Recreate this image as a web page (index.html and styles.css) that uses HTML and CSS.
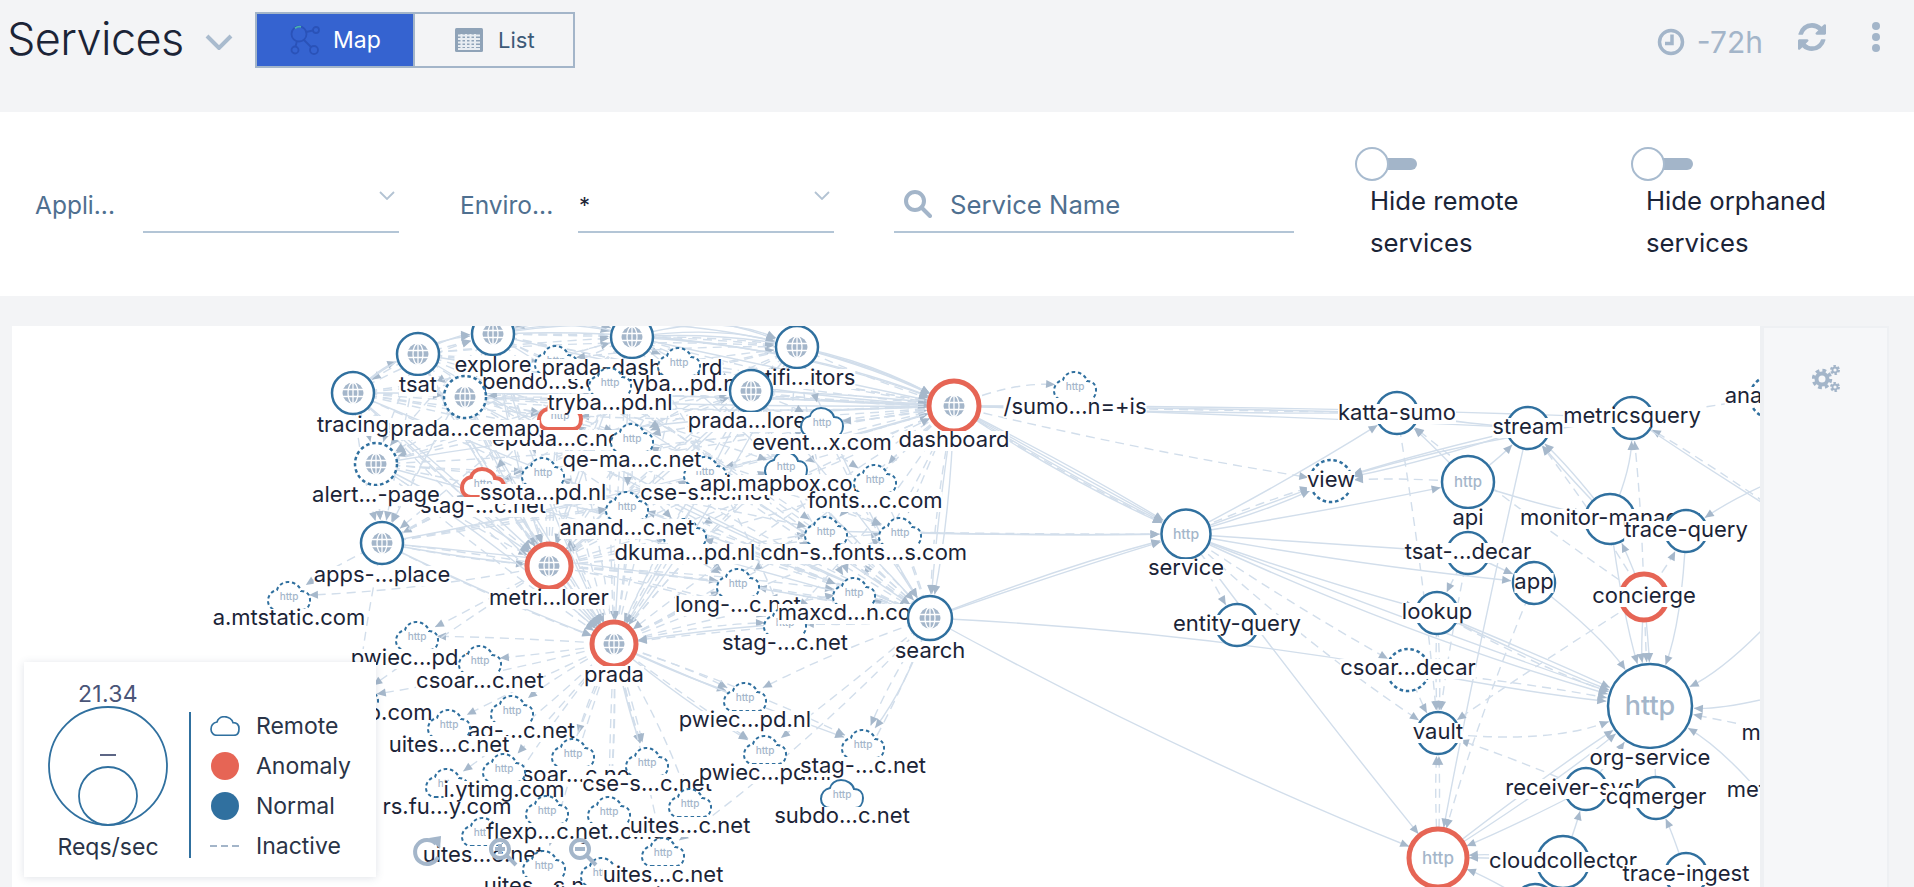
FILE: index.html
```html
<!DOCTYPE html>
<html lang="en">
<head>
<meta charset="utf-8">
<title>Services</title>
<link rel="stylesheet" href="styles.css">
</head>
<body>
<div class="page">
  <header class="topbar">
    <h1 class="title">Services</h1>
    <svg class="title-chevron" viewBox="0 0 28 16"><path d="M2 2 14 14 26 2"/></svg>
    <div class="switch">
      <button class="switch-btn active">
        <svg class="map-icon" viewBox="0 0 32 30"><circle cx="9" cy="9" r="7.5"/><circle cx="26" cy="5" r="3"/><circle cx="5" cy="25" r="3.5"/><circle cx="24" cy="25" r="4"/><path d="M16 7 23 5.500M7 16 5.500 21.500M14 15 21 22"/><path class="map-spin" d="M5 3.200A7.500 7.500 0 0 1 11 1.800"/></svg>
        <span>Map</span>
      </button>
      <button class="switch-btn">
        <svg class="list-icon" viewBox="0 0 28 24"><rect width="28" height="24" rx="1.500" class="list-bg"/><path class="list-grid" d="M3 7.500H25M3 11H25M3 14.500H25M3 18H25M3 21H25M6.500 6V22M11 6V22M15.500 6V22M20 6V22"/></svg>
        <span>List</span>
      </button>
    </div>
    <div class="top-actions">
      <div class="range">
        <svg class="clock" viewBox="0 0 28 28"><circle cx="14" cy="14" r="11.500"/><path d="M15 6.500V15.500H8"/></svg>
        <span>-72h</span>
      </div>
      <svg class="refresh" viewBox="0 0 1536 1536"><path d="M1511 928q0 5-1 7-64 268-268 434.500t-478 166.500q-146 0-282.500-55t-243.500-157l-129 129q-19 19-45 19t-45-19-19-45v-448q0-26 19-45t45-19h448q26 0 45 19t19 45-19 45l-137 137q71 66 161 102t187 36q134 0 250-65t186-179q11-17 53-117 8-23 30-23h192q13 0 22.500 9.500t9.500 22.500zm25-800v448q0 26-19 45t-45 19h-448q-26 0-45-19t-19-45 19-45l138-138q-148-137-349-137-134 0-250 65t-186 179q-11 17-53 117-8 23-30 23h-199q-13 0-22.500-9.500t-9.500-22.500v-7q65-268 270-434.500t480-166.500q146 0 284 55.500t245 156.500l130-129q19-19 45-19t45 19 19 45z"/></svg>
      <div class="kebab"><i></i><i></i><i></i></div>
    </div>
  </header>

  <section class="filters">
    <div class="field field-app">
      <label class="field-label label-app">Appli...</label>
      <div class="select"><svg class="select-chevron" viewBox="0 0 16 9"><path d="M1 1 8 8 15 1"/></svg></div>
    </div>
    <div class="field field-env">
      <label class="field-label label-env">Enviro...</label>
      <div class="select"><span class="select-value">*</span><svg class="select-chevron" viewBox="0 0 16 9"><path d="M1 1 8 8 15 1"/></svg></div>
    </div>
    <div class="field search">
      <svg class="search-icon" viewBox="0 0 28 28"><circle cx="11" cy="11" r="9"/><path d="M17.500 17.500 26 26"/></svg>
      <span class="search-text">Service Name</span>
    </div>
    <div class="toggle-block first">
      <div class="toggle"><span class="thumb"></span><span class="bar"></span></div>
      <p class="toggle-text">Hide remote services</p>
    </div>
    <div class="toggle-block">
      <div class="toggle"><span class="thumb"></span><span class="bar"></span></div>
      <p class="toggle-text">Hide orphaned services</p>
    </div>
  </section>

  <main class="map-row">
    <div class="graph">
      <svg id="graph" class="graph-svg" viewBox="12 326 1748 561">
        <defs>
          <g id="globe">
            <circle r="10.500" class="globe-fill"/>
            <path class="globe-line" d="M-10.500-3.500H10.500M-10.500 3.500H10.500M0-10.500V10.500"/>
            <ellipse rx="5" ry="10.500" class="globe-line"/>
          </g>
          <path id="cloudShape" d="M-12 14H13C18 14 21 10 21 4 21-1 18-5 12-5 11-10 5-14-1-14-7-14-11-10-12-6-17-5-21-1-21 5-21 10-17 14-12 14Z"/>
        </defs>
        <g id="edges"></g>
        <g id="nodes"></g>
        <g class="zoom-tools">
          <path d="M436 844A12 12 0 1 0 438 857"/>
          <path class="zoom-tip" d="M429 838 441 836 440 849Z"/>
          <circle cx="500" cy="849" r="9"/><path d="M507 856 516 865M495 849H505M500 844V854"/>
          <circle cx="580" cy="849" r="9"/><path d="M587 856 596 865M575 849H585"/>
        </g>
      </svg>
      <div class="legend">
        <div class="legend-size">
          <div class="legend-value">21.34</div>
          <svg class="legend-circles" viewBox="0 0 120 120"><circle cx="60" cy="60" r="59"/><circle cx="60" cy="90" r="29"/><path d="M52 49H68"/></svg>
          <div class="legend-unit">Reqs/sec</div>
        </div>
        <div class="legend-divider"></div>
        <ul class="legend-list">
          <li><svg class="legend-cloud" viewBox="-22 -15 44 30"><use href="#cloudShape"/></svg>Remote</li>
          <li><span class="dot dot-anomaly"></span>Anomaly</li>
          <li><span class="dot dot-normal"></span>Normal</li>
          <li><span class="dash-sample"></span>Inactive</li>
        </ul>
      </div>
    </div>
    <aside class="side">
      <svg class="gears" viewBox="0 0 28 28">
        <circle class="gear-teeth" cx="10" cy="15" r="8.500"/><circle class="gear-ring" cx="10" cy="15" r="5.500"/>
        <circle class="gear-teeth small" cx="23" cy="6" r="4"/><circle class="gear-ring small" cx="23" cy="6" r="2.500"/>
        <circle class="gear-teeth small" cx="23" cy="23" r="4"/><circle class="gear-ring small" cx="23" cy="23" r="2.500"/>
      </svg>
    </aside>
  </main>
</div>
<script src="script.js"></script>
</body>
</html>
```

FILE: styles.css
```css
* { box-sizing: border-box; }
html, body { margin: 0; height: 100%; }
body {
  background: #f3f4f6;
  font-family: Inter, "Liberation Sans", sans-serif;
  color: #1b2437;
  overflow: hidden;
}
.page { width: 1914px; height: 887px; display: flex; flex-direction: column; }

/* top bar */
.topbar { height: 112px; flex: none; display: flex; align-items: flex-start; padding-left: 7px; }
.title { margin: 11px 0 0; font-size: 45px; line-height: 56px; font-weight: 300; letter-spacing: -0.6px; color: #1b2437; width: 198px; flex: none; }
.title-chevron { width: 28px; height: 16px; margin-top: 34px; fill: none; stroke: #a9bbce; stroke-width: 4; flex: none; }
.switch { display: flex; margin: 12px 0 0 22px; border: 2px solid #a3b5c9; height: 56px; width: 320px; flex: none; }
.switch-btn { display: flex; align-items: center; width: 158px; border: 0; padding: 0; background: #f3f4f6; font: 22px Inter, sans-serif; color: #3d5a78; }
.switch-btn.active { width: 158px; background: #3563d0; color: #fff; border-right: 2px solid #a3b5c9; padding-left: 33px; font-size: 23px; }
.switch-btn:not(.active) { padding-left: 40px; width: 158px; }
.map-icon { width: 32px; height: 30px; margin-right: 11px; fill: none; stroke: #2a52b8; stroke-width: 1.800; }
.map-spin { stroke: #4db3ad; }
.list-icon { width: 28px; height: 24px; margin-right: 15px; }
.list-bg { fill: #8fa3b8; }
.list-grid { stroke: #e8edf2; stroke-width: 2; fill: none; }
.top-actions { margin-left: auto; display: flex; align-items: flex-start; color: #a3b5c9; padding-right: 34px; }
.range { display: flex; align-items: center; margin-top: 27px; font-size: 30px; line-height: 30px; color: #a3b5c9; }
.clock { width: 28px; height: 28px; margin-right: 12px; fill: none; stroke: #a3b5c9; stroke-width: 3.500; }
.refresh { width: 28px; height: 28px; margin: 23px 0 0 35px; fill: #a3b5c9; }
.kebab { display: flex; flex-direction: column; gap: 3px; margin: 22px 0 0 46px; }
.kebab i { display: block; width: 8px; height: 8px; border-radius: 50%; background: #a3b5c9; }

/* filters */
.filters { height: 184px; flex: none; background: #fff; display: flex; align-items: flex-start; padding: 35px 0 0 35px; }
.field { height: 51px; margin-top: 35px; display: flex; align-items: flex-end; flex: none; }
.field-label { font-size: 24.500px; line-height: 30px; color: #4f7090; margin-bottom: 13px; flex: none; }
.label-app { width: 108px; }
.label-env { width: 118px; }
.field-env { margin-left: 61px; }
.select { width: 256px; height: 51px; border-bottom: 2px solid #b3c5d6; position: relative; }
.select-chevron { position: absolute; right: 4px; top: 9px; width: 16px; height: 9px; fill: none; stroke: #b3c3d3; stroke-width: 1.800; }
.select-value { position: absolute; left: 1px; top: 8px; font-size: 22px; line-height: 30px; color: #1b2437; }
.search { width: 400px; margin-left: 60px; border-bottom: 2px solid #b3c5d6; align-items: flex-start; padding: 8px 0 0 10px; }
.search-icon { width: 28px; height: 28px; margin-right: 18px; fill: none; stroke: #a3b5c9; stroke-width: 4; stroke-linecap: round; }
.search-text { font-size: 25.700px; line-height: 30px; color: #4f7090; }
.toggle-block { width: 276px; flex: none; }
.toggle-block.first { margin-left: 61px; }
.toggle { display: flex; align-items: center; height: 34px; }
.thumb { width: 34px; height: 34px; border-radius: 50%; border: 2px solid #a8bbcf; background: #fff; flex: none; position: relative; z-index: 1; }
.bar { width: 30px; height: 12px; background: #a3b5c9; border-radius: 0 6px 6px 0; margin-left: -2px; }
.toggle-text { margin: -1px 0 0 15px; width: 190px; font-size: 25.700px; line-height: 42px; color: #1b2437; }

/* map */
.map-row { margin-top: 30px; flex: 1; display: flex; padding-left: 12px; min-height: 0; }
.graph { width: 1748px; flex: none; position: relative; background: #fff; overflow: hidden; }
.graph-svg { display: block; width: 1748px; height: 561px; }
.side { width: 129px; flex: none; background: #f6f7f9; border: 2px solid #eef0f3; border-left-width: 4px; border-bottom: 0; display: flex; justify-content: center; padding-top: 36px; }
.gears { width: 28px; height: 28px; }
.gear-teeth { fill: none; stroke: #a3b5c9; stroke-width: 3.500; stroke-dasharray: 3.700 3; }
.gear-teeth.small { stroke-width: 2; stroke-dasharray: 2.400 1.800; }
.gear-ring { fill: none; stroke: #a3b5c9; stroke-width: 4; }
.gear-ring.small { stroke-width: 1.800; }

.edge { fill: none; stroke: #d2deeb; stroke-width: 1.400; }
.edge.dash { stroke-dasharray: 9 6; }
.arrow { fill: #a6b8cb; }
.ring { fill: #fff; stroke: #30709f; stroke-width: 2.500; }
.ring.inactive { stroke-dasharray: 3.500 2.800; }
.ring.red { stroke: #e66555; stroke-width: 5; }
.cloud { fill: #fff; stroke: #30709f; stroke-width: 2; }
.cloud.inactive { stroke-dasharray: 3.500 2.800; }
.cloud.red { stroke: #e66555; stroke-width: 4; }
.globe-fill { fill: #a4b6ca; }
.globe-line { fill: none; stroke: #fff; stroke-width: 1.300; }
.http { font-family: Inter, sans-serif; fill: #a4b6ca; text-anchor: middle; font-weight: 500; }
.node-label { font-family: Inter, sans-serif; font-size: 22px; fill: #1b2437; text-anchor: middle; }
.label-bg { fill: #fff; }
.zoom-tools { fill: none; stroke: #a4b6ca; stroke-width: 4; }
.zoom-tip { fill: #a4b6ca; stroke: none; }

/* legend */
.legend { position: absolute; left: 12px; bottom: 10px; width: 352px; height: 215px; background: #fff; box-shadow: 0 1px 8px rgba(60, 80, 110, .16); display: flex; }
.legend-size { width: 168px; flex: none; text-align: center; padding-top: 20px; font-size: 23px; line-height: 24px; }
.legend-value { color: #4a5578; letter-spacing: .3px; }
.legend-circles { display: block; width: 120px; height: 120px; margin: 0 auto 9px; fill: none; stroke: #30709f; stroke-width: 1.800; overflow: visible; }
.legend-circles path { stroke: #4a5578; }
.legend-unit { color: #2a3447; }
.legend-divider { width: 2px; height: 146px; background: #30709f; margin: 50px 0 0 -3px; flex: none; }
.legend-list { list-style: none; margin: 44px 0 0 19px; padding: 0; font-size: 23px; color: #2a3447; }
.legend-list li { height: 40px; display: flex; align-items: center; gap: 16px; }
.legend-cloud { width: 30px; height: 20px; fill: #fff; stroke: #30709f; stroke-width: 2.500; }
.dot { width: 28px; height: 28px; border-radius: 50%; margin: 0 1px; }
.dot-anomaly { background: #e66555; }
.dot-normal { background: #30709f; }
.dash-sample { width: 30px; height: 2px; background: repeating-linear-gradient(90deg, #a3b5c9 0 7px, transparent 7px 11px); }
```

FILE: script.js
```js
// Service map: node and edge data drawn into the SVG canvas.
const NS = 'http://www.w3.org/2000/svg';
const nodes = [
  // id, kind, x, y, r, label, label baseline, flags (d = inactive, r = anomaly)
  ['mt','c',289,596,18,'a.mtstatic.com',625,'d'],
  ['pw0','c',417,636,18,'pwiec...pd.nl',665,'d'],
  ['cs0','c',480,660,18,'csoar...c.net',688,'d'],
  ['web','c',357,697,18,'assets...b.com',720,'d'],
  ['st5','c',512,710,18,'stag-...c.net',738,'d'],
  ['ui0','c',449,724,18,'uites...c.net',752,'d'],
  ['cs2','c',573,753,18,'csoar...c.net',782,'d'],
  ['rs','c',447,783,18,'rs.fu...y.com',814,'d'],
  ['yt','c',504,768,18,'i.ytimg.com',797,'d'],
  ['cs3','c',647,762,18,'cse-s...c.net',791,'d'],
  ['ui2','c',483,832,18,'uites...c.net',862,'d'],
  ['st6','c',609,811,18,'stag-...c.net',839,'d'],
  ['fl','c',547,810,18,'flexp...c.net',839,'d'],
  ['ui1','c',690,803,18,'uites...c.net',833,'d'],
  ['ui3','c',544,865,18,'uites...c.net',893,'d'],
  ['hi','c',602,872,18,'uites...c.net',901,'d'],
  ['ui4','c',663,852,18,'uites...c.net',882,'d'],

  ['stag1','c',483,483,18,'stag-...c.net',513,'r'],
  ['ssota','c',543,472,18,'ssota...pd.nl',500,'d'],
  ['cse1','c',705,471,18,'cse-s...c.net',500,'d'],
  ['apim','c',786,466,18,'api.mapbox.com',491,''],
  ['fonts1','c',875,479,18,'fonts...c.com',508,'d'],
  ['dkuma','c',685,533,18,'dkuma...pd.nl',560,'d'],
  ['anand','c',627,506,18,'anand...c.net',535,'d'],
  ['cdn','c',826,531,18,'cdn-s...c.net',560,'d'],
  ['fonts2','c',900,532,18,'fonts...s.com',560,'d'],
  ['long','c',738,583,18,'long-...c.net',612,'d'],
  ['stag2','c',785,622,18,'stag-...c.net',650,'d'],
  ['maxcd','c',854,592,18,'maxcd...n.com',620,'d'],
  ['epuda','c',560,415,18,'epuda...c.net',446,'r'],
  ['pendo','c',556,360,18,'pendo...s.com',389,'d'],
  ['explore','g',493,334,21,'explore',372,''],
  ['pdash','g',632,337,21,'prada-dashboard',375,''],
  ['tryba1','c',679,362,18,'tryba...pd.nl',391,'d'],
  ['tryba2','c',610,382,18,'tryba...pd.nl',410,'d'],
  ['tsat','g',418,354,21,'tsat',392,''],
  ['tracing','g',353,393,21,'tracing',432,''],
  ['pcemap','g',465,397,21,'prada...cemap',436,'d'],
  ['qema','c',632,438,18,'qe-ma...c.net',467,'d'],
  ['notifi','g',797,347,21,'notifi...itors',385,''],
  ['plorer','g',751,391,21,'prada...lorer',428,''],
  ['event','c',822,422,18,'event...x.com',450,''],
  ['alert','g',376,464,21,'alert...-page',502,'d'],
  ['apps','g',382,543,21,'apps-...place',582,''],
  ['metri','g',549,566,22,'metri...lorer',605,'r'],
  ['prada','g',614,644,22,'prada',682,'r'],
  ['dashboard','g',954,406,25,'dashboard',447,'r'],
  ['search','g',930,618,22,'search',658,''],
  ['pw1','c',745,697,18,'pwiec...pd.nl',727,'d'],
  ['pw2','c',765,750,18,'pwiec...pd.nl',780,'d'],
  ['st3','c',863,744,18,'stag-...c.net',773,'d'],
  ['subdo','c',842,794,18,'subdo...c.net',823,''],
  ['sumo','c',1075,386,18,'/sumo...n=+is',414,'d'],

  ['service','h',1186,534,24.500,'service',575,''],
  ['view','n',1331,481,21,'view',487,'d'],
  ['entity','n',1237,625,21,'entity-query',631,''],
  ['katta','n',1397,413,21,'katta-sumo',420,''],
  ['stream','n',1528,428,21,'stream',434,''],
  ['mq','n',1632,418,21,'metricsquery',423,''],
  ['ana','n',1771,397,21,'analytics',403,'d'],
  ['api','h',1468,482,26,'api',525,''],
  ['monitor','n',1610,519,25,'monitor-manager',525,''],
  ['trace','n',1686,531,21,'trace-query',537,''],
  ['tsd','n',1468,553,21,'tsat-...decar',559,''],
  ['app','n',1534,583,21,'app',589,''],
  ['concierge','n',1644,597,23,'concierge',603,'r'],
  ['lookup','n',1437,613,21,'lookup',619,''],
  ['csd','n',1408,670,21,'csoar...decar',675,'d'],
  ['vault','n',1438,733,21,'vault',739,''],
  ['org','h',1650,706,42,'org-service',765,''],
  ['receiver','n',1586,789,21,'receiver-syslog',795,''],
  ['cq','n',1656,798,21,'cqmerger',804,''],
  ['mon2','n',1795,735,21,'monitor-ui',740,''],
  ['me','n',1796,792,21,'metering-svc',797,''],
  ['redh','h',1438,858,29,'',0,'r'],
  ['low','n',1535,905,21,'',0,''],
  ['cc','n',1563,862,26,'cloudcollector',868,''],
  ['ti','n',1686,874,21,'trace-ingest',881,''],
  ['xa','x',1800,470,1,'',0,''],
  ['xb','x',1800,690,1,'',0,''],
  ['xc','x',1790,600,1,'',0,''],
  ['xd','x',1790,830,1,'',0,''],
  ['xe','x',1790,520,1,'',0,'']
].map(([id, kind, x, y, r, label, ly, flags]) => ({ id, kind, x, y, r, label, ly, flags }));

const byId = Object.fromEntries(nodes.map(n => [n.id, n]));
const edgesG = document.getElementById('edges');
const nodesG = document.getElementById('nodes');

function el(tag, attrs, parent) {
  const e = document.createElementNS(NS, tag);
  for (const k in attrs) e.setAttribute(k, attrs[k]);
  parent.appendChild(e);
  return e;
}

let seq = 0;
function edge(from, to, dashed, bend) {
  const a = byId[from], b = byId[to];
  seq++;
  if (bend === undefined) bend = ((seq * 7) % 9 - 4) * 0.012;
  const dx = b.x - a.x, dy = b.y - a.y;
  const cx = (a.x + b.x) / 2 - dy * bend, cy = (a.y + b.y) / 2 + dx * bend;
  const tx = b.x - cx, ty = b.y - cy, tl = Math.hypot(tx, ty) || 1;
  const ux = tx / tl, uy = ty / tl;
  const gap = b.r + 2;
  const ex = b.x - ux * gap, ey = b.y - uy * gap;
  el('path', { class: dashed ? 'edge dash' : 'edge', d: `M${a.x} ${a.y}Q${cx.toFixed(1)} ${cy.toFixed(1)} ${ex.toFixed(1)} ${ey.toFixed(1)}` }, edgesG);
  if (b.kind !== 'x') {
    const L = 9, W = 4, bx = ex - ux * L, by = ey - uy * L;
    el('path', { class: 'arrow', d: `M${ex.toFixed(1)} ${ey.toFixed(1)}L${(bx - uy * W).toFixed(1)} ${(by + ux * W).toFixed(1)}L${(bx + uy * W).toFixed(1)} ${(by - ux * W).toFixed(1)}Z` }, edgesG);
  }
}

const globes = ['tsat','tracing','explore','pdash','notifi','pcemap','alert','apps','plorer'];
const clouds = ['pendo','tryba1','tryba2','epuda','qema','stag1','ssota','cse1','apim','anand','dkuma','long','event','fonts1','cdn','fonts2','maxcd','stag2'];
['dashboard','metri','prada'].forEach(hub => {
  globes.forEach(g => { edge(g, hub, false); edge(g, hub, true, 0.03); });
  clouds.forEach(c => edge(hub, c, true));
});
clouds.forEach(c => { edge('search', c, true); });
globes.forEach(g => { edge(g, 'search', false); });
globes.forEach((g, i) => globes.slice(i + 1).forEach(h => edge(g, h, true)));
globes.forEach((g, i) => clouds.forEach((c, j) => { if ((i + j) % 4 === 0) edge(g, c, true); }));

[['explore','pdash',-.12],['explore','pdash',-.2],['pdash','explore',.16],['pdash','notifi',-.1],['pdash','notifi',-.18],
 ['explore','notifi',-.1],['explore','notifi',-.16],['notifi','dashboard',-.06],['pdash','dashboard',-.08],['pdash','dashboard',-.14],
 ['explore','dashboard',-.1],['tsat','explore',-.12],['tracing','tsat',-.1],['tracing','explore',-.16]]
  .forEach(([a, b, k]) => { edge(a, b, false, k); });

['ui0','yt','rs','cs2','cs3','fl','st6','ui1','st5','pw0','cs0'].forEach(c => edge('prada', c, true));
edge('prada','cs3',true,.02); edge('prada','cs3',true,-.02); edge('prada','st6',true,.01); edge('prada','st6',true,-.03);
edge('prada','cs3',false,.04);
['pw1','pw2','st3'].forEach(c => { edge('prada', c, true); edge('search', c, true); });
edge('prada','pw1',false,.03); edge('prada','st3',false,.02); edge('prada','pw2',false,.04);
edge('search','st3',false,-.08); edge('search','subdo',true,-.05);
edge('metri','web',true); edge('metri','pw0',true); edge('metri','mt',true); edge('apps','mt',true,.03);
edge('alert','apps',true,0); edge('apps','web',true,.02); edge('prada','web',true); edge('search','ui4',true);
edge('prada','ui2',true); edge('prada','ui3',true); edge('prada','ui4',true);
edge('metri','prada',false,.02); edge('metri','prada',true,-.06);
edge('dashboard','prada',true); edge('dashboard','search',false,-.04); edge('dashboard','search',false,.02);
edge('dashboard','search',true,.04); edge('search','prada',false); edge('search','prada',true,.02);
edge('dashboard','sumo',true,-.12); edge('metri','search',true); edge('metri','dashboard',true);

[0,.02,-.02,.04].forEach(k => edge('dashboard','service',false,k));
edge('dashboard','service',true,.03);
edge('search','service',false,-.01); edge('search','service',false,-.03);
edge('fonts2','service',true,.005); edge('fonts2','service',false,.01);
edge('cdn','service',false,.01); edge('dashboard','view',true,.02);
[.01,-.005].forEach(k => edge('dashboard','katta',false,k));
edge('dashboard','katta',true,0); edge('dashboard','stream',false,-.005); edge('dashboard','mq',false,-.01);
edge('search','csd',false,-.03);
edge('search','redh',false,.03);
edge('service','view',false,0); edge('service','view',false,.04); edge('service','view',true,-.03);
edge('service','katta',false,.02); edge('service','api',false,.01);
edge('service','tsd',false,0); edge('service','app',false,.02);
edge('service','lookup',false,.02); edge('service','org',false,.04); edge('service','org',false,.01);
edge('service','csd',true,.02); edge('service','entity',true,0); edge('service','vault',true,.04); edge('service','redh',false,.01);

[['lookup','org',false,.02],['lookup','org',false,-.01],['lookup','org',true,.04],['csd','org',false,.02],['csd','org',true,-.02],
 ['vault','org',true,.12],['redh','org',false,.03],['redh','org',false,-.02],['redh','vault',true,.02],['redh','vault',true,-.03],
 ['api','katta',false,.02],['api','stream',false,.04],['api','view',true,.03],['api','monitor',false,.03],
 ['stream','view',false,.02],['stream','view',false,-.03],['mq','view',false,.04],['monitor','stream',false,.04],['monitor','stream',false,-.02],
 ['monitor','mq',false,.1],['concierge','mq',true,.02],['concierge','stream',true,.03],['concierge','katta',true,-.02],
 ['concierge','org',false,.06],['concierge','org',false,-.02],['concierge','org',true,.01],['concierge','monitor',false,.02],['trace','org',false,-.08],['concierge','trace',true,.04],
 ['monitor','org',false,.04],['xa','trace',false,.06],['xb','org',false,-.08],['xc','org',false,-.1],['mon2','org',true,0],['xd','org',false,.1],['xe','mq',true,.02],
 ['mq','ana',true,0],['mq','xe',false,.01],['stream','mq',false,.02],['katta','stream',false,.02],
 ['tsd','lookup',true,.02],['tsd','vault',true,.02],['tsd','app',false,.01],['lookup','vault',true,.02],['lookup','vault',true,-.03],['csd','vault',true,.03],
 ['katta','vault',true,-.02],['stream','redh',false,.01],['app','org',false,-.08],['app','redh',true,.03],
 ['concierge','vault',true,.01],['receiver','org',false,.02],['cq','org',false,.02],['cc','receiver',false,.02],
 ['ti','cq',false,.03],['cc','redh',false,.02],['cc','redh',false,.06],['ti','cc',false,.01],['low','redh',false,.04],['receiver','redh',false,-.02],['receiver','vault',true,.02]]
  .forEach(([a, b, d, k]) => edge(a, b, d, k));

nodes.forEach(n => {
  if (n.kind === 'x') return;
  const g = el('g', { transform: `translate(${n.x} ${n.y})` }, nodesG);
  const state = n.flags === 'r' ? ' red' : n.flags === 'd' ? ' inactive' : '';
  if (n.kind === 'c') {
    el('use', { href: '#cloudShape', class: 'cloud' + state }, g);
    const t = el('text', { class: 'http', y: 4, 'font-size': 10 }, g);
    t.textContent = 'http';
  } else {
    el('circle', { r: n.r, class: 'ring' + state }, g);
    if (n.kind === 'g') el('use', { href: '#globe' }, g);
    if (n.kind === 'h') {
      const size = n.r > 35 ? 27 : n.r > 28 ? 17 : n.r > 25 ? 15 : 14;
      const t = el('text', { class: 'http', y: size * 0.35, 'font-size': size }, g);
      t.textContent = 'http';
    }
  }
  if (n.label) {
    const bg = el('rect', { class: 'label-bg' }, nodesG);
    const t = el('text', { class: 'node-label', x: n.x, y: n.ly }, nodesG);
    t.textContent = n.label;
    const w = t.getComputedTextLength();
    bg.setAttribute('x', n.x - w / 2);
    bg.setAttribute('y', n.ly - 16);
    bg.setAttribute('width', w);
    bg.setAttribute('height', 20);
  }
});
```
